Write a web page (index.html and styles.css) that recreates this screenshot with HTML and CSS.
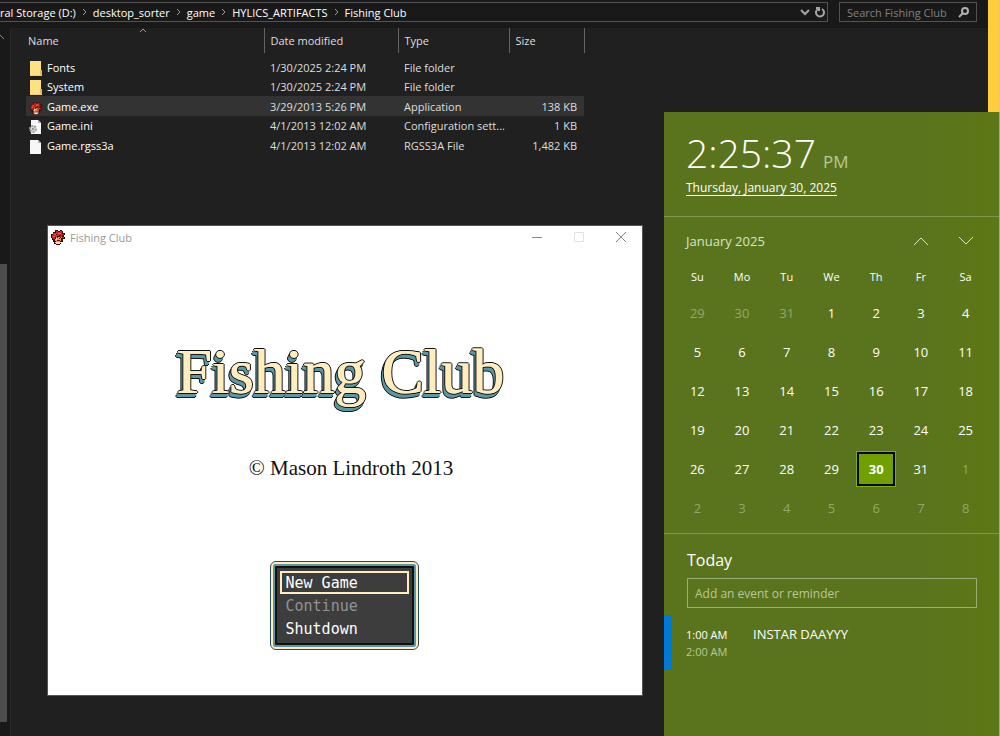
FILE: index.html
```
<!DOCTYPE html>
<html lang="en">

<head>
    <meta charset="UTF-8">
    <meta name="viewport" content="width=device-width, initial-scale=1.0">
    <title>Fishing Club</title>
    <link rel="stylesheet" href="styles.css">
</head>

<body>
    <!-- shared icons -->
    <svg class="sprite" aria-hidden="true">
        <symbol id="icon-folder" viewBox="0 0 14 16">
            <path d="M1 0h11v9h1v6H1z" fill="#ffe082" />
            <path d="M11 9h2v6h-2z" fill="#e8bd4e" />
            <path d="M1 14h12v1H1z" fill="#f3cf69" />
        </symbol>
        <symbol id="icon-file" viewBox="0 0 14 16">
            <path d="M1 1h8l3 3v11H1z" fill="#f7f7f7" />
            <path d="M9 1v3h3z" fill="#b5b5b5" />
        </symbol>
        <symbol id="icon-config" viewBox="0 0 14 16">
            <path d="M2 1h7l3 3v11H2z" fill="#f7f7f7" />
            <path d="M9 1v3h3z" fill="#b5b5b5" />
            <circle cx="4" cy="10" r="3" fill="#d5d9dc" stroke="#9aa1a7" stroke-width="2" stroke-dasharray="2 1" />
            <circle cx="4" cy="10" r="1" fill="#7b838a" />
        </symbol>
        <symbol id="icon-game" viewBox="0 0 16 16">
            <path d="M5 1h3v1h2V1h2v1h1v2h2v2h-1v2h1v2h-2v3h-2v2h-1v1H6v-1H4v-2H3v-2H2V9H1V5h2V3h2z" fill="#3a0c0a" />
            <path d="M6 2h2v1h2V2h2v3h2v1h-2v2h2v1h-3V8h-1V7H7v1H5v2H3V9H2V6h1V4h3z" fill="#c3281d" />
            <path d="M4 5h2v1H4zM8 4h3v1H8zM3 7h2v1H3zM11 8h1v1h-1z" fill="#f4604a" />
            <path d="M6 8h4v1h1v3h-1v1H6v-1H5v-2h1z" fill="#e89a5c" />
            <path d="M5 13h6v1h-1v1H6v-1H5zM6 9h1v2H6z" fill="#f8dcc8" />
            <path d="M7 8h1v1H7zM9 9h1v1H9zM7 11h3v1H7zM6 5h1v1H6zM9 6h2v1H9z" fill="#6d1410" />
        </symbol>
    </svg>

    <div class="explorer">
        <header class="toolbar">
            <nav class="address" aria-label="Address">
                <a href="#">ral Storage (D:)</a>
                <svg class="sep" viewBox="0 0 5 8"><path d="M1 1l3 3-3 3" /></svg>
                <a href="#">desktop_sorter</a>
                <svg class="sep" viewBox="0 0 5 8"><path d="M1 1l3 3-3 3" /></svg>
                <a href="#">game</a>
                <svg class="sep" viewBox="0 0 5 8"><path d="M1 1l3 3-3 3" /></svg>
                <a href="#">HYLICS_ARTIFACTS</a>
                <svg class="sep" viewBox="0 0 5 8"><path d="M1 1l3 3-3 3" /></svg>
                <a href="#">Fishing Club</a>
                <span class="address-tools">
                    <button type="button" aria-label="Previous locations">
                        <svg width="10" height="8" viewBox="0 0 10 8"><path d="M1 2l4 4 4-4" /></svg>
                    </button>
                    <button type="button" aria-label="Refresh">
                        <svg width="10" height="12" viewBox="0 0 10 12"><path d="M7 3a4 4 0 1 1-4 0M1 2h3v3" /></svg>
                    </button>
                </span>
            </nav>
            <div class="search">
                <input type="text" aria-label="Search Fishing Club" placeholder="Search Fishing Club">
                <svg width="11" height="11" viewBox="0 0 11 11"><circle cx="7" cy="4" r="3" /><path d="M5 6l-4 4" /></svg>
            </div>
        </header>

        <div class="explorer-body">
            <aside class="nav-pane">
                <svg width="6" height="6" viewBox="0 0 6 6"><path d="M0 1l4 4" /></svg>
                <div class="scroll-thumb"></div>
            </aside>
            <main class="files">
                <table class="file-table">
                    <colgroup>
                        <col class="col-name">
                        <col class="col-date">
                        <col class="col-type">
                        <col class="col-size">
                    </colgroup>
                    <thead>
                        <tr>
                            <th>Name
                                <svg class="sort" viewBox="0 0 8 5"><path d="M1 4l3-3 3 3" /></svg>
                            </th>
                            <th>Date modified</th>
                            <th>Type</th>
                            <th>Size</th>
                        </tr>
                    </thead>
                    <tbody>
                        <tr>
                            <td><svg class="file-icon"><use href="#icon-folder" /></svg>Fonts</td>
                            <td>1/30/2025 2:24 PM</td>
                            <td>File folder</td>
                            <td></td>
                        </tr>
                        <tr>
                            <td><svg class="file-icon"><use href="#icon-folder" /></svg>System</td>
                            <td>1/30/2025 2:24 PM</td>
                            <td>File folder</td>
                            <td></td>
                        </tr>
                        <tr class="selected">
                            <td><svg class="file-icon"><use href="#icon-game" /></svg>Game.exe</td>
                            <td>3/29/2013 5:26 PM</td>
                            <td>Application</td>
                            <td>138 KB</td>
                        </tr>
                        <tr>
                            <td><svg class="file-icon"><use href="#icon-config" /></svg>Game.ini</td>
                            <td>4/1/2013 12:02 AM</td>
                            <td>Configuration sett...</td>
                            <td>1 KB</td>
                        </tr>
                        <tr>
                            <td><svg class="file-icon"><use href="#icon-file" /></svg>Game.rgss3a</td>
                            <td>4/1/2013 12:02 AM</td>
                            <td>RGSS3A File</td>
                            <td>1,482 KB</td>
                        </tr>
                    </tbody>
                </table>
            </main>
        </div>
    </div>

    <div class="side-strip"></div>

    <section class="game-window">
        <header class="titlebar">
            <svg class="game-icon"><use href="#icon-game" /></svg>
            <span>Fishing Club</span>
            <div class="window-buttons">
                <button type="button" aria-label="Minimize">
                    <svg width="12" height="12" viewBox="0 0 12 12"><path d="M1 6.5h10" /></svg>
                </button>
                <button type="button" aria-label="Maximize" disabled>
                    <svg width="12" height="12" viewBox="0 0 12 12"><path d="M1.5 1.5h9v9h-9z" /></svg>
                </button>
                <button type="button" aria-label="Close">
                    <svg width="12" height="12" viewBox="0 0 12 12"><path d="M1 1l10 10M11 1L1 11" /></svg>
                </button>
            </div>
        </header>
        <div class="game-screen">
            <h1>Fishing Club</h1>
            <p>© Mason Lindroth 2013</p>
            <div class="menu">
                <button type="button" class="active">New Game</button>
                <button type="button" disabled>Continue</button>
                <button type="button">Shutdown</button>
            </div>
        </div>
    </section>

    <section class="clock-panel">
        <div class="clock">
            <div class="time">2:25:37<span>PM</span></div>
            <a href="#" class="date">Thursday, January 30, 2025</a>
        </div>
        <div class="calendar">
            <div class="month">
                <span>January 2025</span>
                <button type="button" aria-label="Previous month">
                    <svg width="16" height="10" viewBox="0 0 16 10"><path d="M1 9l7-7 7 7" /></svg>
                </button>
                <button type="button" aria-label="Next month">
                    <svg width="16" height="10" viewBox="0 0 16 10"><path d="M1 1l7 7 7-7" /></svg>
                </button>
            </div>
            <table class="days">
                <thead>
                    <tr><th>Su</th><th>Mo</th><th>Tu</th><th>We</th><th>Th</th><th>Fr</th><th>Sa</th></tr>
                </thead>
                <tbody>
                    <tr><td class="other">29</td><td class="other">30</td><td class="other">31</td><td>1</td><td>2</td><td>3</td><td>4</td></tr>
                    <tr><td>5</td><td>6</td><td>7</td><td>8</td><td>9</td><td>10</td><td>11</td></tr>
                    <tr><td>12</td><td>13</td><td>14</td><td>15</td><td>16</td><td>17</td><td>18</td></tr>
                    <tr><td>19</td><td>20</td><td>21</td><td>22</td><td>23</td><td>24</td><td>25</td></tr>
                    <tr><td>26</td><td>27</td><td>28</td><td>29</td><td><button type="button" class="today">30</button></td><td>31</td><td class="other">1</td></tr>
                    <tr><td class="other">2</td><td class="other">3</td><td class="other">4</td><td class="other">5</td><td class="other">6</td><td class="other">7</td><td class="other">8</td></tr>
                </tbody>
            </table>
        </div>
        <div class="agenda">
            <h2>Today</h2>
            <input type="text" aria-label="Add an event or reminder" placeholder="Add an event or reminder">
            <div class="event">
                <div class="event-time">1:00 AM<span>2:00 AM</span></div>
                <div class="event-name">INSTAR DAAYYY</div>
            </div>
        </div>
    </section>
</body>

</html>
```
FILE: styles.css
```
:root {
    --explorer-bg: #202020;
    --explorer-dark: #191919;
    --line: #535353;
    --green: #59741d;
    --green-line: #7d9650;
    --green-muted: #b9c79a;
    --cream: #ffedc0;
    --teal: #5a98a6;
}

* {
    box-sizing: border-box;
    margin: 0;
    padding: 0;
}

body {
    font-family: 'Open Sans', 'Noto Sans', sans-serif;
    font-size: 11px;
    color: #fff;
    background-color: var(--explorer-bg);
    height: 100vh;
    overflow: hidden;
}

button,
input {
    font: inherit;
    color: inherit;
    background: none;
    border: none;
}

a {
    color: inherit;
    text-decoration: none;
}

svg {
    fill: none;
    flex-shrink: 0;
}

.sprite {
    display: none;
}

/* Explorer */
.explorer {
    display: flex;
    flex-direction: column;
    height: 100vh;
}

.toolbar {
    display: flex;
    gap: 11px;
    height: 28px;
    padding: 2px 23px 6px 0;
    background-color: var(--explorer-dark);
}

.address {
    display: flex;
    flex: 1;
    align-items: center;
    gap: 6px;
    border: 1px solid var(--line);
    border-left: none;
    white-space: nowrap;
}

.sep {
    width: 5px;
    height: 8px;
    stroke: #9a9a9a;
}

.address-tools {
    display: flex;
    gap: 5px;
    margin-left: auto;
    padding-right: 2px;
}

.address-tools button {
    display: flex;
    align-items: center;
    stroke: #a5a5a5;
    stroke-width: 2;
}

.search {
    display: flex;
    align-items: center;
    width: 138px;
    padding: 0 7px;
    border: 1px solid var(--line);
    stroke: #b0b0b0;
    stroke-width: 2;
}

.search input {
    flex: 1;
    min-width: 0;
}

.search input::placeholder {
    color: #808080;
}

.explorer-body {
    display: flex;
    flex: 1;
}

.nav-pane {
    display: flex;
    flex-direction: column;
    width: 11px;
    padding: 6px 3px 14px 0;
    background-color: var(--explorer-dark);
    border-right: 1px solid #2b2b2b;
    stroke: #888;
}

.scroll-thumb {
    flex: 1;
    margin-top: 224px;
    background-color: #4d4d4d;
}

.files {
    padding-left: 15px;
}

.file-table {
    width: 558px;
    table-layout: fixed;
    border-collapse: collapse;
    white-space: nowrap;
}

.col-name {
    width: 238px;
}

.col-date {
    width: 134px;
}

.col-type {
    width: 111px;
}

.col-size {
    width: 75px;
}

.file-table th {
    position: relative;
    height: 25px;
    padding-left: 6px;
    font-weight: normal;
    text-align: left;
    color: #dedede;
    border-right: 1px solid #636363;
}

.file-table th:first-child {
    padding-left: 2px;
}

.sort {
    position: absolute;
    top: 0;
    left: 113px;
    width: 8px;
    height: 5px;
    stroke: #9a9a9a;
}

.file-table tbody::before {
    content: "";
    display: block;
    height: 4px;
}

.file-table td {
    height: 20px;
    padding-left: 6px;
    color: #dedede;
}

.file-table tr:nth-child(even) td {
    height: 19px;
}

.file-table td:first-child {
    padding-left: 3px;
    color: #fff;
}

.file-table td:last-child {
    padding-right: 7px;
    text-align: right;
}

.selected {
    background-color: #333;
}

.file-icon {
    width: 14px;
    height: 16px;
    margin: -4px 4px -4px 0;
    vertical-align: middle;
}

.side-strip {
    position: absolute;
    top: 0;
    right: 0;
    width: 12px;
    height: 112px;
    background-color: #ffce3d;
    border-right: 1px solid #c9c9c9;
}

/* Game window */
.game-window {
    position: absolute;
    top: 225px;
    left: 47px;
    width: 596px;
    height: 471px;
    display: flex;
    flex-direction: column;
    background-color: #fff;
    border: 1px solid #555;
}

.titlebar {
    display: flex;
    align-items: center;
    height: 22px;
    padding-left: 2px;
    gap: 4px;
    color: #999;
}

.game-icon {
    width: 16px;
    height: 16px;
}

.window-buttons {
    display: flex;
    margin-left: auto;
}

.window-buttons button {
    display: flex;
    justify-content: center;
    width: 42px;
    stroke: #888;
}

.window-buttons button:disabled {
    stroke: #e2e2e2;
}

.game-screen {
    display: flex;
    flex: 1;
    flex-direction: column;
    align-items: center;
    padding: 84px 10px 0 0;
    color: #111;
    font-family: 'Liberation Serif', serif;
}

/* cream face, black outline, teal side */
.game-screen h1 {
    font-size: 63px;
    line-height: 80px;
    font-weight: normal;
    color: var(--cream);
    text-shadow:
        1px 0 var(--cream),
        2px 0 #111, -1px 0 #111, 0 1px #111, 0 -1px #111, 1px 1px #111, 1px -1px #111,
        -1px 2px var(--teal), 0 2px var(--teal), -1px 3px var(--teal), 0 3px var(--teal),
        -2px 4px var(--teal), -1px 4px var(--teal),
        -3px 4px #111, 0 4px #111, -2px 5px #111, -1px 5px #111, -2px 2px #111;
}

.game-screen p {
    margin-top: 43px;
    padding-left: 22px;
    font-size: 21px;
    line-height: 26px;
}

.menu {
    display: flex;
    flex-direction: column;
    width: 147px;
    margin-top: 81px;
    margin-left: 8px;
    padding: 7px;
    font-family: 'DejaVu Sans Mono', monospace;
    font-size: 15px;
    color: #fff;
    background-color: #3d3d3d;
    border: 2px solid var(--cream);
    border-radius: 5px;
    outline: 1px solid #264c55;
    box-shadow: inset 0 0 0 2px var(--teal), inset 0 0 0 4px #111;
}

.menu button {
    height: 23px;
    padding-left: 4px;
    border: 2px solid transparent;
    text-align: left;
    line-height: 18px;
}

.menu .active {
    border-color: var(--cream);
}

.menu button:disabled {
    color: #929292;
}

/* Clock and calendar flyout */
.clock-panel {
    position: absolute;
    top: 112px;
    right: 1px;
    bottom: 0;
    width: 335px;
    font-size: 13px;
    background: linear-gradient(to right, var(--green) 75%, #5d7715);
    box-shadow: 1px 0 #a5a5a5;
}

.clock {
    height: 105px;
    padding: 18px 22px 0;
    border-bottom: 1px solid var(--green-line);
}

.time {
    font-size: 39px;
    font-weight: 300;
    line-height: 46px;
}

.time span {
    margin-left: 7px;
    font-size: 17px;
    font-weight: normal;
    line-height: 1;
    color: var(--green-muted);
}

.date {
    display: block;
    width: fit-content;
    margin-top: 5px;
    font-size: 12px;
    line-height: 14px;
    border-bottom: 1px solid #fff;
}

.calendar {
    padding: 6px 11px 6px;
    border-bottom: 1px solid var(--green-line);
}

.month {
    display: flex;
    align-items: center;
    height: 36px;
    padding-left: 11px;
    color: #dbe3c8;
}

.month span {
    flex: 1;
}

.month button {
    display: flex;
    justify-content: center;
    width: 45px;
    stroke: #dbe3c8;
}

.days {
    width: 100%;
    table-layout: fixed;
    border-collapse: collapse;
    text-align: center;
}

.days th {
    height: 34px;
    font-size: 11px;
    font-weight: normal;
}

.days td {
    height: 39px;
}

.days .other {
    color: #93a76b;
}

.today {
    width: 38px;
    height: 34px;
    font-weight: bold;
    background-color: #70a000;
    border: 2px solid #000;
    outline: 1px solid #7cb00a;
}

.agenda {
    padding: 13px 22px 0 23px;
}

.agenda h2 {
    font-size: 16px;
    line-height: 26px;
    font-weight: normal;
}

.agenda input {
    width: 100%;
    height: 30px;
    margin-top: 5px;
    padding: 0 7px;
    font-size: 12px;
    border: 1px solid #9bae79;
}

.agenda input::placeholder {
    color: var(--green-muted);
}

.event {
    display: flex;
    height: 54px;
    margin: 7px -22px 0 -23px;
    padding-top: 11px;
    padding-left: 14px;
    border-left: 8px solid #0078d7;
}

.event-time {
    width: 67px;
    font-size: 11px;
    line-height: 17px;
}

.event-time span {
    display: block;
    color: var(--green-muted);
}

.event-name {
    line-height: 16px;
}
```
